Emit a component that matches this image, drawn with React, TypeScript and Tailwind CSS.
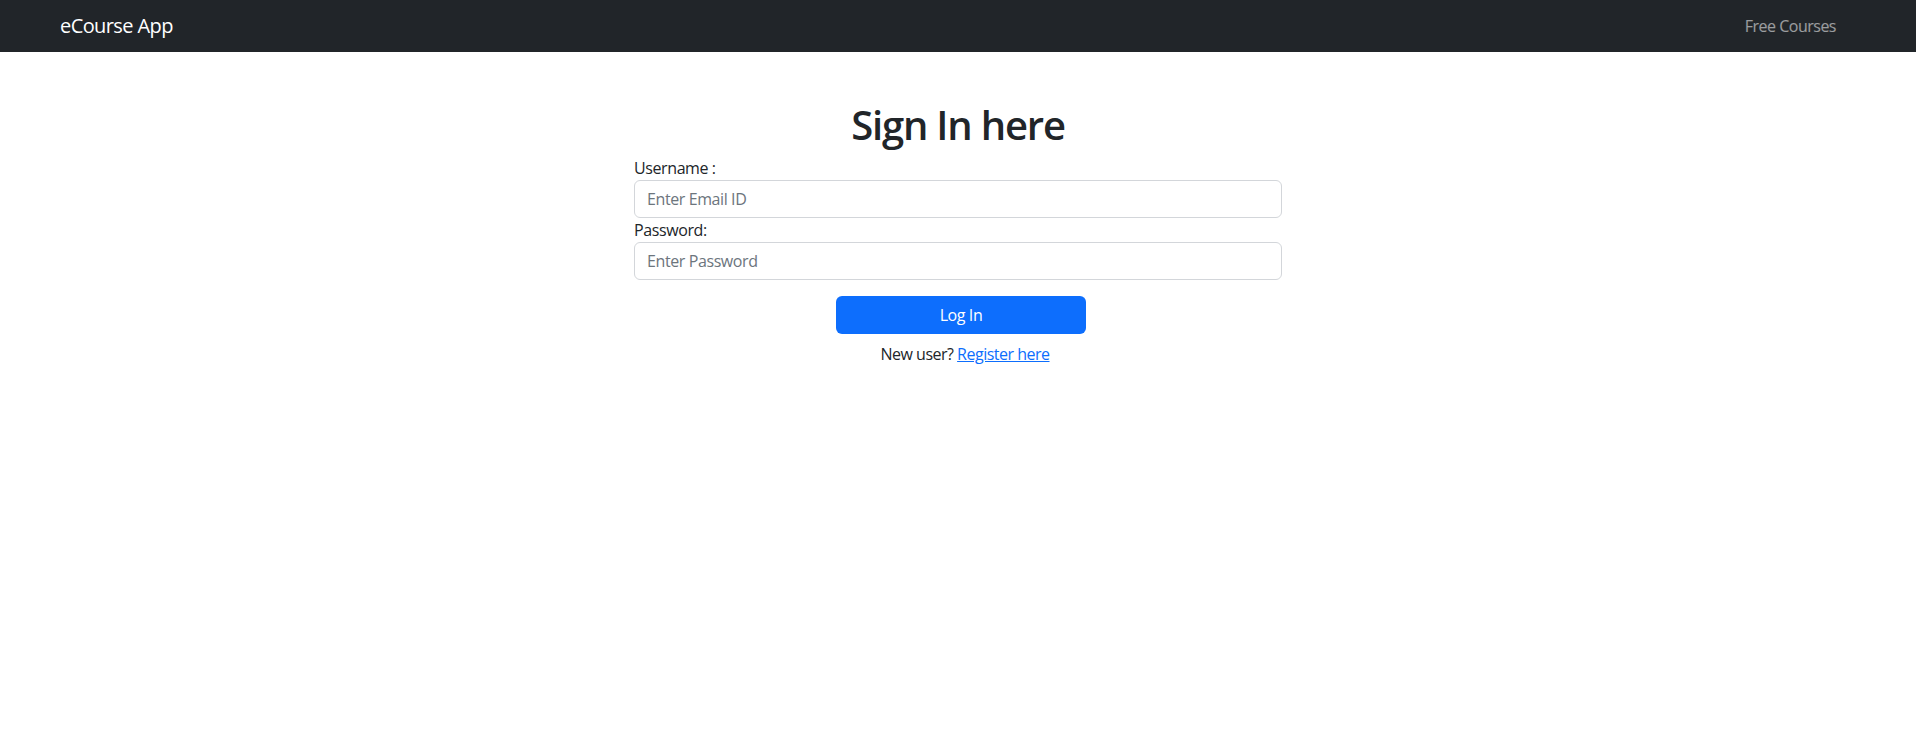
import React, { useState } from 'react';

const font = "font-['Open_Sans','Noto_Sans',sans-serif]";

const Navbar = () => (
  <nav className="h-[52px] bg-[#212529] flex items-center justify-between pl-[60px] pr-[80px]">
    <a href="#" className="text-[20px] text-white leading-[30px] tracking-[-0.6px]">eCourse App</a>
    <a href="#" className="text-[16px] text-white/55 leading-[24px] tracking-[-0.5px]">Free Courses</a>
  </nav>
);

const App = () => {
  const [email, setEmail] = useState('');
  const [password, setPassword] = useState('');

  return (
    <div className={`min-h-screen bg-white text-[#212529] ${font}`}>
      <Navbar />
      <div className="mt-[49px] flex justify-center">
        <form className="w-[648px]" onSubmit={(e) => e.preventDefault()}>
          <h1 className="text-[40px] font-semibold leading-[48px] mb-[7px] text-center tracking-[-1.2px]">Sign In here</h1>
          <label htmlFor="email" className="block text-[16px] leading-[24px] tracking-[-0.4px]">Username :</label>
          <input
            id="email"
            type="email"
            value={email}
            onChange={(e) => setEmail(e.target.value)}
            placeholder="Enter Email ID"
            className="block w-full h-[38px] px-3 text-[16px] tracking-[-0.4px] border border-[#d3d6da] rounded-[6px] placeholder:text-[#6c757d] outline-none focus:border-[#86b7fe]"
          />
          <label htmlFor="password" className="block text-[16px] leading-[24px] tracking-[-0.4px]">Password:</label>
          <input
            id="password"
            type="password"
            value={password}
            onChange={(e) => setPassword(e.target.value)}
            placeholder="Enter Password"
            className="block w-full h-[38px] px-3 text-[16px] tracking-[-0.4px] border border-[#d3d6da] rounded-[6px] placeholder:text-[#6c757d] outline-none focus:border-[#86b7fe]"
          />
          <div className="flex justify-center mt-4 pl-[6px]">
            <button type="submit" className="w-[250px] h-[38px] bg-[#0d6efd] text-white text-[16px] tracking-[-0.4px] rounded-[6px] hover:bg-[#0b5ed7]">
              Log In
            </button>
          </div>
          <p className="mt-2 text-center text-[16px] leading-[24px] tracking-[-0.5px] pl-[14px]">
            New user? <a href="#" className="text-[#0d6efd] underline">Register here</a>
          </p>
        </form>
      </div>
    </div>
  );
};

export default App;
